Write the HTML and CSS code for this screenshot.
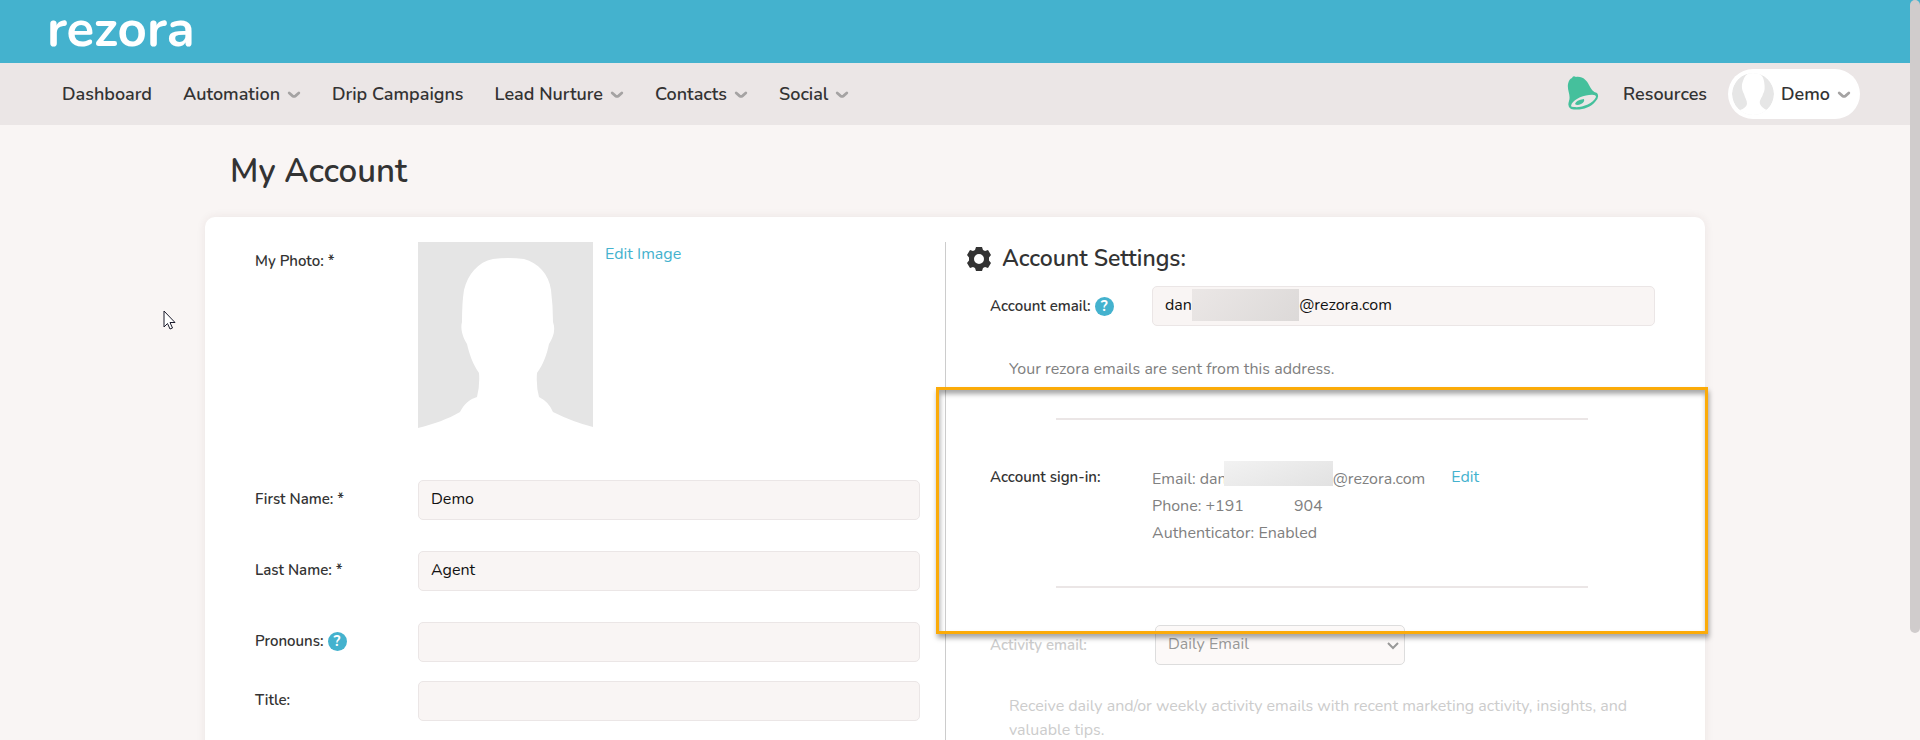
FILE: index.html
```html
<!DOCTYPE html>
<html lang="en">

<head>
    <meta charset="utf-8">
    <title>My Account</title>
    <link rel="stylesheet" href="styles.css">
</head>

<body>
    <!-- shared icons -->
    <svg class="sprite" width="0" height="0" aria-hidden="true">
        <symbol id="chevron" viewBox="0 0 14 8">
            <path d="M2.200 2 L5.500 4.800 Q7 6 8.500 4.800 L11.800 2" fill="none" stroke="#a5a3a3" stroke-width="2.800" stroke-linecap="round" />
        </symbol>
        <symbol id="person" viewBox="0 0 175 196">
            <path fill="#fff" d="M0 196 V186 C16 182 30 177 42 170 C46 162 52 157 59 155 Q62 143 61 131 C55 123 51 111 49 102 C45 96 42 87 44 80 Q44 60 46 48 C50 32 60 20 75 17 Q90 15 106 17 C120 21 131 32 133 48 Q135 64 135 80 C138 88 135 96 131 102 C129 112 125 123 119 131 Q118 144 121 155 Q131 160 135 170 Q155 180 175 185 V196 Z" />
        </symbol>
    </svg>

    <header class="topbar">
        <a class="logo" href="#">rezora</a>
    </header>

    <nav class="nav">
        <div class="nav-group">
            <a href="#">Dashboard</a>
            <a href="#">Automation <svg class="chevron"><use href="#chevron" /></svg></a>
            <a href="#">Drip Campaigns</a>
            <a href="#">Lead Nurture <svg class="chevron"><use href="#chevron" /></svg></a>
            <a href="#">Contacts <svg class="chevron"><use href="#chevron" /></svg></a>
            <a href="#">Social <svg class="chevron"><use href="#chevron" /></svg></a>
        </div>
        <div class="nav-group nav-right">
            <button class="bell" aria-label="Notifications">
                <svg width="32" height="36" viewBox="0 0 32 36">
                    <path fill="#45c09c" d="M5 3 Q6 0 9 2 C16 1 20 6 22 10 C24 14 26 17 30 18 Q33 22 28 27 C23 33 13 36 4 34 Q0 32 2 26 C4 20 0 16 1 9 Q2 4 5 3 Z" />
                    <path fill="#ebe6e6" d="M4 31 C5 25 14 21 22 20 Q29 19 29 22 C26 29 14 33 7 32 Q4 32 4 31 Z" />
                    <path fill="#45c09c" d="M8 29 Q9 25 17 24 Q18 27 14 29 Q10 31 8 29 Z" />
                </svg>
            </button>
            <a href="#">Resources</a>
            <button class="user">
                <svg class="avatar" viewBox="0 0 42 42">
                    <circle cx="21" cy="21" r="21" fill="#e6e6e6" />
                    <path fill="#fff" d="M8 42 V37 Q14 35 15 31 C15 27 13 25 12 21 C10 17 9 13 11 8 Q13 1 18 0 H26 Q31 2 32 8 C33 14 33 18 31 21 C30 25 27 27 28 31 Q30 35 35 37 V42 Z" />
                </svg>
                Demo
                <svg class="chevron"><use href="#chevron" /></svg>
            </button>
        </div>
    </nav>

    <main class="page">
        <h1>My Account</h1>

        <form class="card">
            <div class="profile">
                <div class="row photo-row">
                    <span class="label">My Photo: *</span>
                    <svg class="photo" viewBox="0 0 175 196" role="img" aria-label="Photo">
                        <rect width="175" height="190" fill="#e5e5e5" />
                        <use href="#person" />
                    </svg>
                    <a class="link" href="#">Edit Image</a>
                </div>
                <div class="row">
                    <label class="label" for="first">First Name: *</label>
                    <input id="first" type="text" value="Demo">
                </div>
                <div class="row">
                    <label class="label" for="last">Last Name: *</label>
                    <input id="last" type="text" value="Agent">
                </div>
                <div class="row row-tight">
                    <label class="label" for="pronouns">Pronouns: <span class="help">?</span></label>
                    <input id="pronouns" type="text">
                </div>
                <div class="row">
                    <label class="label" for="title">Title:</label>
                    <input id="title" type="text">
                </div>
            </div>

            <div class="settings">
                <h2>
                    <svg class="gear" viewBox="0 0 24 24">
                        <path fill="#333" fill-rule="evenodd" d="M9 0 H15 L16 3 L18 4 L21 3 L24 8 L22 10.500 V13.500 L24 16 L21 21 L18 20 L16 21 L15 24 H9 L8 21 L6 20 L3 21 L0 16 L2 13.500 V10.500 L0 8 L3 3 L6 4 L8 3 Z M12 7 A5 5 0 1 0 12 17 A5 5 0 1 0 12 7 Z" />
                    </svg>
                    Account Settings:
                </h2>
                <div class="row">
                    <label class="label" for="email">Account email: <span class="help">?</span></label>
                    <div class="masked">
                        <input id="email" type="text" value="dan                          @rezora.com">
                        <span class="mask"></span>
                    </div>
                </div>
                <p class="hint">Your rezora emails are sent from this address.</p>

                <section class="signin">
                    <hr>
                    <div class="row signin-row">
                        <span class="label">Account sign-in:</span>
                        <div class="signin-info">
                            <div>Email: dan<span class="mask-inline"></span>@rezora.com</div>
                            <div>Phone: +191<span class="blank"></span>904</div>
                            <div>Authenticator: Enabled</div>
                        </div>
                        <a class="link" href="#">Edit</a>
                    </div>
                    <hr>
                </section>

                <div class="row activity">
                    <label class="label" for="activity">Activity email:</label>
                    <div class="select">
                        <select id="activity" disabled>
                            <option>Daily Email</option>
                        </select>
                        <svg class="arrow" width="12" height="8" viewBox="0 0 12 8">
                            <path d="M1 1 L6 6 L11 1" fill="none" stroke="#999" stroke-width="2" />
                        </svg>
                    </div>
                </div>
                <p class="hint faded">Receive daily and/or weekly activity emails with recent marketing activity, insights, and valuable tips.</p>
            </div>
        </form>
    </main>

    <div class="scroll-thumb"></div>
    <svg class="cursor" width="13" height="20" viewBox="0 0 13 20">
        <path d="M1 1 V17 L4.500 13.500 L7 19 L9.500 18 L7 12.500 H12 Z" fill="#fff" stroke="#1a1a2a" stroke-width="1" />
    </svg>
</body>

</html>
```

FILE: styles.css
```css
* {
    box-sizing: border-box;
}

html {
    height: 100%;
    overflow: hidden;
}

body {
    margin: 0;
    padding-right: 10px;
    height: 100%;
    overflow: hidden;
    background-color: #f9f5f4;
    color: #333;
    font-family: Nunito, Lato, sans-serif;
    font-size: 16px;
    line-height: 24px;
}

a {
    color: inherit;
    text-decoration: none;
}

button {
    border: none;
    background: none;
    padding: 0;
    font: inherit;
    color: inherit;
    cursor: pointer;
}

.sprite {
    position: absolute;
}

.topbar {
    display: flex;
    height: 63px;
    margin-right: -10px;
    padding: 0 47px;
    background-color: #44b2ce;
}

.logo {
    color: #fff;
    font-size: 51px;
    font-weight: 700;
    line-height: 59px;
}

/* navigation */
.nav {
    display: flex;
    justify-content: space-between;
    align-items: center;
    height: 62px;
    padding: 0 50px 0 62px;
    background-color: #ebe6e6;
    font-size: 18px;
    font-weight: 600;
    line-height: 22px;
}

.nav-group {
    display: flex;
    align-items: center;
    gap: 31px;
}

.nav-group a {
    display: flex;
    align-items: center;
    gap: 7px;
}

.nav-right {
    gap: 21px;
}

.chevron {
    width: 14px;
    height: 8px;
    margin-top: 2px;
}

.bell {
    padding: 0 3px 3px 0;
}

.bell svg {
    display: block;
}

.user {
    display: flex;
    align-items: center;
    gap: 7px;
    height: 50px;
    padding: 0 9px 0 4px;
    border-radius: 25px;
    background-color: #fff;
}

.avatar {
    width: 42px;
    height: 42px;
    border-radius: 50%;
}

/* account page */
.page {
    max-width: 1500px;
    margin: 0 auto;
}

h1 {
    margin: 0;
    padding: 27px 25px 25px;
    font-size: 33px;
    font-weight: 600;
    line-height: 40px;
}

.card {
    display: grid;
    grid-template-columns: 69fr 71fr;
    padding: 25px 50px 40px;
    border-radius: 10px;
    background-color: #fff;
    box-shadow: 0 0 10px rgba(80, 40, 40, 0.08);
}

.profile {
    padding-right: 25px;
}

.settings {
    padding-left: 21px;
    border-left: 1px solid #ccc;
}

.row {
    display: flex;
    align-items: center;
    margin-bottom: 31px;
}

.row-tight {
    margin-bottom: 19px;
}

.label {
    display: flex;
    align-items: center;
    gap: 4px;
    flex: none;
    width: 163px;
    font-size: 15px;
    font-weight: 600;
}

.help {
    width: 19px;
    height: 19px;
    border-radius: 50%;
    background-color: #44b2ce;
    color: #fff;
    font-size: 15px;
    font-weight: 700;
    line-height: 19px;
    text-align: center;
}

input,
select {
    width: 100%;
    height: 40px;
    padding: 0 12px 2px;
    border: 1px solid #ebe6e6;
    border-radius: 5px;
    background-color: #f9f5f4;
    color: #111;
    font: inherit;
}

.profile .label {
    padding-bottom: 2px;
}

.photo-row {
    align-items: flex-start;
    margin-bottom: 42px;
}

.photo-row .label {
    padding-top: 7px;
}

.photo {
    width: 175px;
    height: 196px;
    margin-right: 12px;
}

.link {
    color: #44b2ce;
}

h2 {
    display: flex;
    align-items: center;
    gap: 11px;
    margin: 0 0 10px;
    font-size: 23px;
    font-weight: 600;
    line-height: 34px;
}

.gear {
    width: 24px;
    height: 24px;
}

.settings .row {
    padding-left: 23px;
}

.settings .row .label {
    width: 162px;
}

.masked {
    position: relative;
    flex: 1;
}

.mask {
    position: absolute;
    left: 40px;
    top: 3px;
    width: 107px;
    height: 32px;
    background: linear-gradient(135deg, #ebe7e6, #dcd9d8);
}

.hint {
    margin: 0;
    padding: 0 20px 0 42px;
    color: #808080;
}

.faded {
    color: #ccc;
}

/* outlined sign-in block */
.signin {
    position: relative;
    margin: 6px 0;
    padding: 31px 0;
}

.signin::after {
    content: "";
    position: absolute;
    z-index: 1;
    inset: 0 -53px -15px -31px;
    border: 3px solid #fbab09;
    box-shadow: 1px 4px 5px rgba(0, 0, 0, 0.35), inset 1px 4px 5px rgba(0, 0, 0, 0.35);
    pointer-events: none;
}

.signin hr {
    margin: 0 67px 0 89px;
    border: none;
    border-top: 2px solid #ebe6e6;
}

.signin-row {
    align-items: flex-start;
    margin: 45px 0 39px;
}

.signin-info {
    padding-top: 1px;
    color: #808080;
    line-height: 27px;
}

.signin-row .link {
    margin-left: 26px;
}

.mask-inline {
    display: inline-block;
    width: 109px;
    height: 25px;
    margin: -10px 0 0 -3px;
    background: linear-gradient(160deg, #f2f2f2, #e2e2e2);
    vertical-align: -2px;
}

.blank {
    display: inline-block;
    width: 50px;
}

.activity .label {
    color: #ccc;
}

.settings .activity {
    margin-bottom: 29px;
}

.select {
    position: relative;
    width: 250px;
    margin-left: 3px;
}

select {
    appearance: none;
    border-color: #ddd;
    background-color: #fcf9f8;
    color: #999;
    opacity: 1;
}

.arrow {
    position: absolute;
    right: 6px;
    top: 17px;
}

.scroll-thumb {
    position: fixed;
    top: 0;
    right: 0;
    width: 10px;
    height: 633px;
    border-radius: 5px;
    background-color: #d0cccc;
}

.cursor {
    position: fixed;
    left: 163px;
    top: 310px;
}
```
